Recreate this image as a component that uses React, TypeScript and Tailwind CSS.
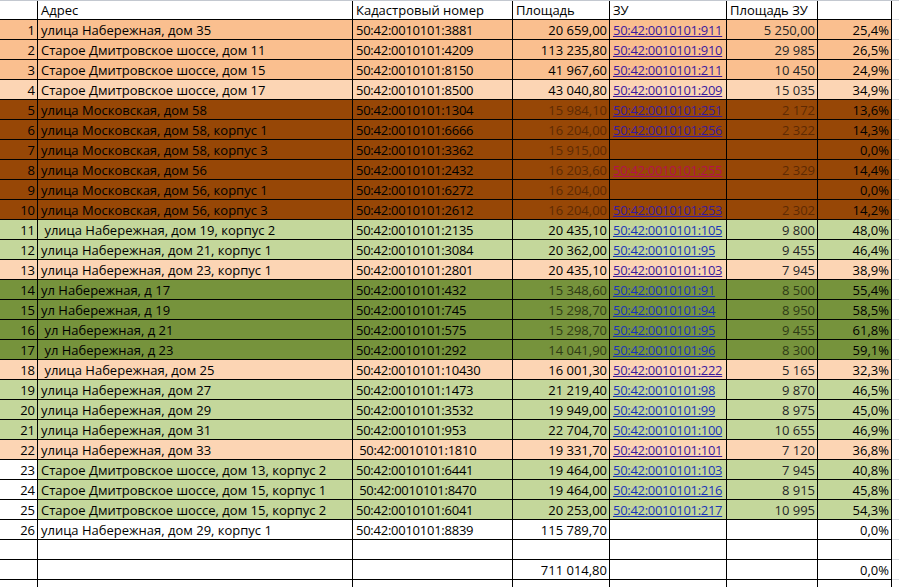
import React from "react";

type Fill = "salmon" | "peach" | "brown" | "green" | "dkgreen" | "white";
type Link = "visited" | "blue" | "red";

type Row = {
  n: number;
  addr: string;
  cad: string;
  area: string;
  zu: string;
  zuArea: string;
  pct: string;
  fill: Fill;
  link?: Link;
  numWhite?: boolean;
};

const fills: Record<Fill, string> = {
  salmon: "bg-[#fabf8f]",
  peach: "bg-[#fcd5b4]",
  brown: "bg-[#974706]",
  green: "bg-[#c4d79b]",
  dkgreen: "bg-[#76933c]",
  white: "bg-white",
};

const linkColors: Record<Link, string> = {
  visited: "text-[#3a1a9e]",
  blue: "text-[#1a35b8]",
  red: "text-[#b3124f]",
};

const rows: Row[] = [
  { n: 1, addr: "улица Набережная, дом 35", cad: "50:42:0010101:3881", area: "20 659,00", zu: "50:42:0010101:911", zuArea: "5 250,00", pct: "25,4%", fill: "salmon", link: "visited" },
  { n: 2, addr: "Старое Дмитровское шоссе, дом 11", cad: "50:42:0010101:4209", area: "113 235,80", zu: "50:42:0010101:910", zuArea: "29 985", pct: "26,5%", fill: "salmon", link: "visited" },
  { n: 3, addr: "Старое Дмитровское шоссе, дом 15", cad: "50:42:0010101:8150", area: "41 967,60", zu: "50:42:0010101:211", zuArea: "10 450", pct: "24,9%", fill: "salmon", link: "visited" },
  { n: 4, addr: "Старое Дмитровское шоссе, дом 17", cad: "50:42:0010101:8500", area: "43 040,80", zu: "50:42:0010101:209", zuArea: "15 035", pct: "34,9%", fill: "peach", link: "visited" },
  { n: 5, addr: "улица Московская, дом 58", cad: "50:42:0010101:1304", area: "15 984,10", zu: "50:42:0010101:251", zuArea: "2 172", pct: "13,6%", fill: "brown", link: "visited" },
  { n: 6, addr: "улица Московская, дом 58, корпус 1", cad: "50:42:0010101:6666", area: "16 204,00", zu: "50:42:0010101:256", zuArea: "2 322", pct: "14,3%", fill: "brown", link: "visited" },
  { n: 7, addr: "улица Московская, дом 58, корпус 3", cad: "50:42:0010101:3362", area: "15 915,00", zu: "", zuArea: "", pct: "0,0%", fill: "brown" },
  { n: 8, addr: "улица Московская, дом 56", cad: "50:42:0010101:2432", area: "16 203,60", zu: "50:42:0010101:255", zuArea: "2 329", pct: "14,4%", fill: "brown", link: "red" },
  { n: 9, addr: "улица Московская, дом 56, корпус 1", cad: "50:42:0010101:6272", area: "16 204,00", zu: "", zuArea: "", pct: "0,0%", fill: "brown" },
  { n: 10, addr: "улица Московская, дом 56, корпус 3", cad: "50:42:0010101:2612", area: "16 204,00", zu: "50:42:0010101:253", zuArea: "2 302", pct: "14,2%", fill: "brown", link: "visited" },
  { n: 11, addr: " улица Набережная, дом 19, корпус 2", cad: "50:42:0010101:2135", area: "20 435,10", zu: "50:42:0010101:105", zuArea: "9 800", pct: "48,0%", fill: "green", link: "blue" },
  { n: 12, addr: "улица Набережная, дом 21, корпус 1", cad: "50:42:0010101:3084", area: "20 362,00", zu: "50:42:0010101:95", zuArea: "9 455", pct: "46,4%", fill: "green", link: "blue" },
  { n: 13, addr: "улица Набережная, дом 23, корпус 1", cad: "50:42:0010101:2801", area: "20 435,10", zu: "50:42:0010101:103", zuArea: "7 945", pct: "38,9%", fill: "peach", link: "visited" },
  { n: 14, addr: "ул Набережная, д 17", cad: "50:42:0010101:432", area: "15 348,60", zu: "50:42:0010101:91", zuArea: "8 500", pct: "55,4%", fill: "dkgreen", link: "blue" },
  { n: 15, addr: "ул Набережная, д 19", cad: "50:42:0010101:745", area: "15 298,70", zu: "50:42:0010101:94", zuArea: "8 950", pct: "58,5%", fill: "dkgreen", link: "blue" },
  { n: 16, addr: " ул Набережная, д 21", cad: "50:42:0010101:575", area: "15 298,70", zu: "50:42:0010101:95", zuArea: "9 455", pct: "61,8%", fill: "dkgreen", link: "blue" },
  { n: 17, addr: " ул Набережная, д 23", cad: "50:42:0010101:292", area: "14 041,90", zu: "50:42:0010101:96", zuArea: "8 300", pct: "59,1%", fill: "dkgreen", link: "blue" },
  { n: 18, addr: " улица Набережная, дом 25", cad: "50:42:0010101:10430", area: "16 001,30", zu: "50:42:0010101:222", zuArea: "5 165", pct: "32,3%", fill: "peach", link: "visited" },
  { n: 19, addr: "улица Набережная, дом 27", cad: "50:42:0010101:1473", area: "21 219,40", zu: "50:42:0010101:98", zuArea: "9 870", pct: "46,5%", fill: "green", link: "blue" },
  { n: 20, addr: "улица Набережная, дом 29", cad: "50:42:0010101:3532", area: "19 949,00", zu: "50:42:0010101:99", zuArea: "8 975", pct: "45,0%", fill: "green", link: "blue" },
  { n: 21, addr: "улица Набережная, дом 31", cad: "50:42:0010101:953", area: "22 704,70", zu: "50:42:0010101:100", zuArea: "10 655", pct: "46,9%", fill: "green", link: "blue" },
  { n: 22, addr: "улица Набережная, дом 33", cad: " 50:42:0010101:1810", area: "19 331,70", zu: "50:42:0010101:101", zuArea: "7 120", pct: "36,8%", fill: "peach", link: "visited" },
  { n: 23, addr: "Старое Дмитровское шоссе, дом 13, корпус 2", cad: "50:42:0010101:6441", area: "19 464,00", zu: "50:42:0010101:103", zuArea: "7 945", pct: "40,8%", fill: "green", link: "blue", numWhite: true },
  { n: 24, addr: "Старое Дмитровское шоссе, дом 15, корпус 1", cad: " 50:42:0010101:8470", area: "19 464,00", zu: "50:42:0010101:216", zuArea: "8 915", pct: "45,8%", fill: "green", link: "blue", numWhite: true },
  { n: 25, addr: "Старое Дмитровское шоссе, дом 15, корпус 2", cad: "50:42:0010101:6041", area: "20 253,00", zu: "50:42:0010101:217", zuArea: "10 995", pct: "54,3%", fill: "green", link: "blue", numWhite: true },
  { n: 26, addr: "улица Набережная, дом 29, корпус 1", cad: "50:42:0010101:8839", area: "115 789,70", zu: "", zuArea: "", pct: "0,0%", fill: "white" },
];

const cell = "h-full shrink-0 border-r border-b border-black whitespace-pre overflow-hidden leading-[19px] pt-px";

function dimText(fill: Fill) {
  if (fill === "brown") return "text-[#5e2a03]";
  if (fill === "dkgreen") return "text-[#2f3c15]";
  return "text-[#262626]";
}

function SheetRow({ r }: { r: Row }) {
  const bg = fills[r.fill];
  return (
    <div className="flex h-[20px] text-black">
      <div className={`${cell} w-[38px] text-right pr-[2px] ${r.numWhite ? "bg-white" : bg}`}>{r.n}</div>
      <div className={`${cell} w-[315px] pl-[3px] ${bg}`}>{r.addr}</div>
      <div className={`${cell} w-[160px] pl-[3px] tracking-[-0.25px] ${bg}`}>{r.cad}</div>
      <div className={`${cell} w-[97px] text-right pr-[2px] ${bg} ${r.fill === "brown" || r.fill === "dkgreen" ? dimText(r.fill) : ""}`}>{r.area}</div>
      <div className={`${cell} w-[117px] pl-[3px] tracking-[-0.3px] ${bg}`}>
        {r.zu && <span className={`underline ${linkColors[r.link ?? "blue"]}`}>{r.zu}</span>}
      </div>
      <div className={`${cell} w-[91px] text-right pr-[2px] ${bg} ${dimText(r.fill)}`}>{r.zuArea}</div>
      <div className={`${cell} w-[74px] text-right pr-[2px] ${bg}`}>{r.pct}</div>
      <div className="h-full flex-1 border-b border-[#d9dde3] bg-white" />
    </div>
  );
}

function PlainRow({ area = "", pct = "" }: { area?: string; pct?: string }) {
  return (
    <div className="flex h-[20px] text-black bg-white">
      <div className={`${cell} w-[38px]`} />
      <div className={`${cell} w-[315px]`} />
      <div className={`${cell} w-[160px]`} />
      <div className={`${cell} w-[97px] text-right pr-[2px]`}>{area}</div>
      <div className={`${cell} w-[117px]`} />
      <div className={`${cell} w-[91px]`} />
      <div className={`${cell} w-[74px] text-right pr-[2px]`}>{pct}</div>
      <div className="h-full flex-1 border-b border-[#d9dde3]" />
    </div>
  );
}

export default function App() {
  return (
    <div
      className="w-[899px] h-[587px] overflow-hidden bg-white text-[13px]"
      style={{ fontFamily: '"Open Sans", "Noto Sans", sans-serif' }}
    >
      <div className="flex h-[20px] border-t border-[#c3c8d0] text-black">
        <div className="h-full shrink-0 w-[38px] border-r border-b border-black" />
        <div className="h-full shrink-0 w-[315px] border-r border-b border-black pl-[3px] leading-[18px]">Адрес</div>
        <div className="h-full shrink-0 w-[160px] border-r border-b border-black pl-[3px] leading-[18px]">Кадастровый номер</div>
        <div className="h-full shrink-0 w-[97px] border-r border-b border-black pl-[3px] leading-[18px]">Площадь</div>
        <div className="h-full shrink-0 w-[117px] border-r border-b border-black pl-[3px] leading-[18px]">ЗУ</div>
        <div className="h-full shrink-0 w-[91px] border-r border-b border-black pl-[3px] leading-[18px]">Площадь ЗУ</div>
        <div className="h-full shrink-0 w-[74px] border-r border-b border-black" />
        <div className="h-full flex-1 border-b border-[#d9dde3]" />
      </div>
      {rows.map((r) => (
        <SheetRow key={r.n} r={r} />
      ))}
      <PlainRow />
      <PlainRow area="711 014,80" pct="0,0%" />
      <PlainRow />
    </div>
  );
}
